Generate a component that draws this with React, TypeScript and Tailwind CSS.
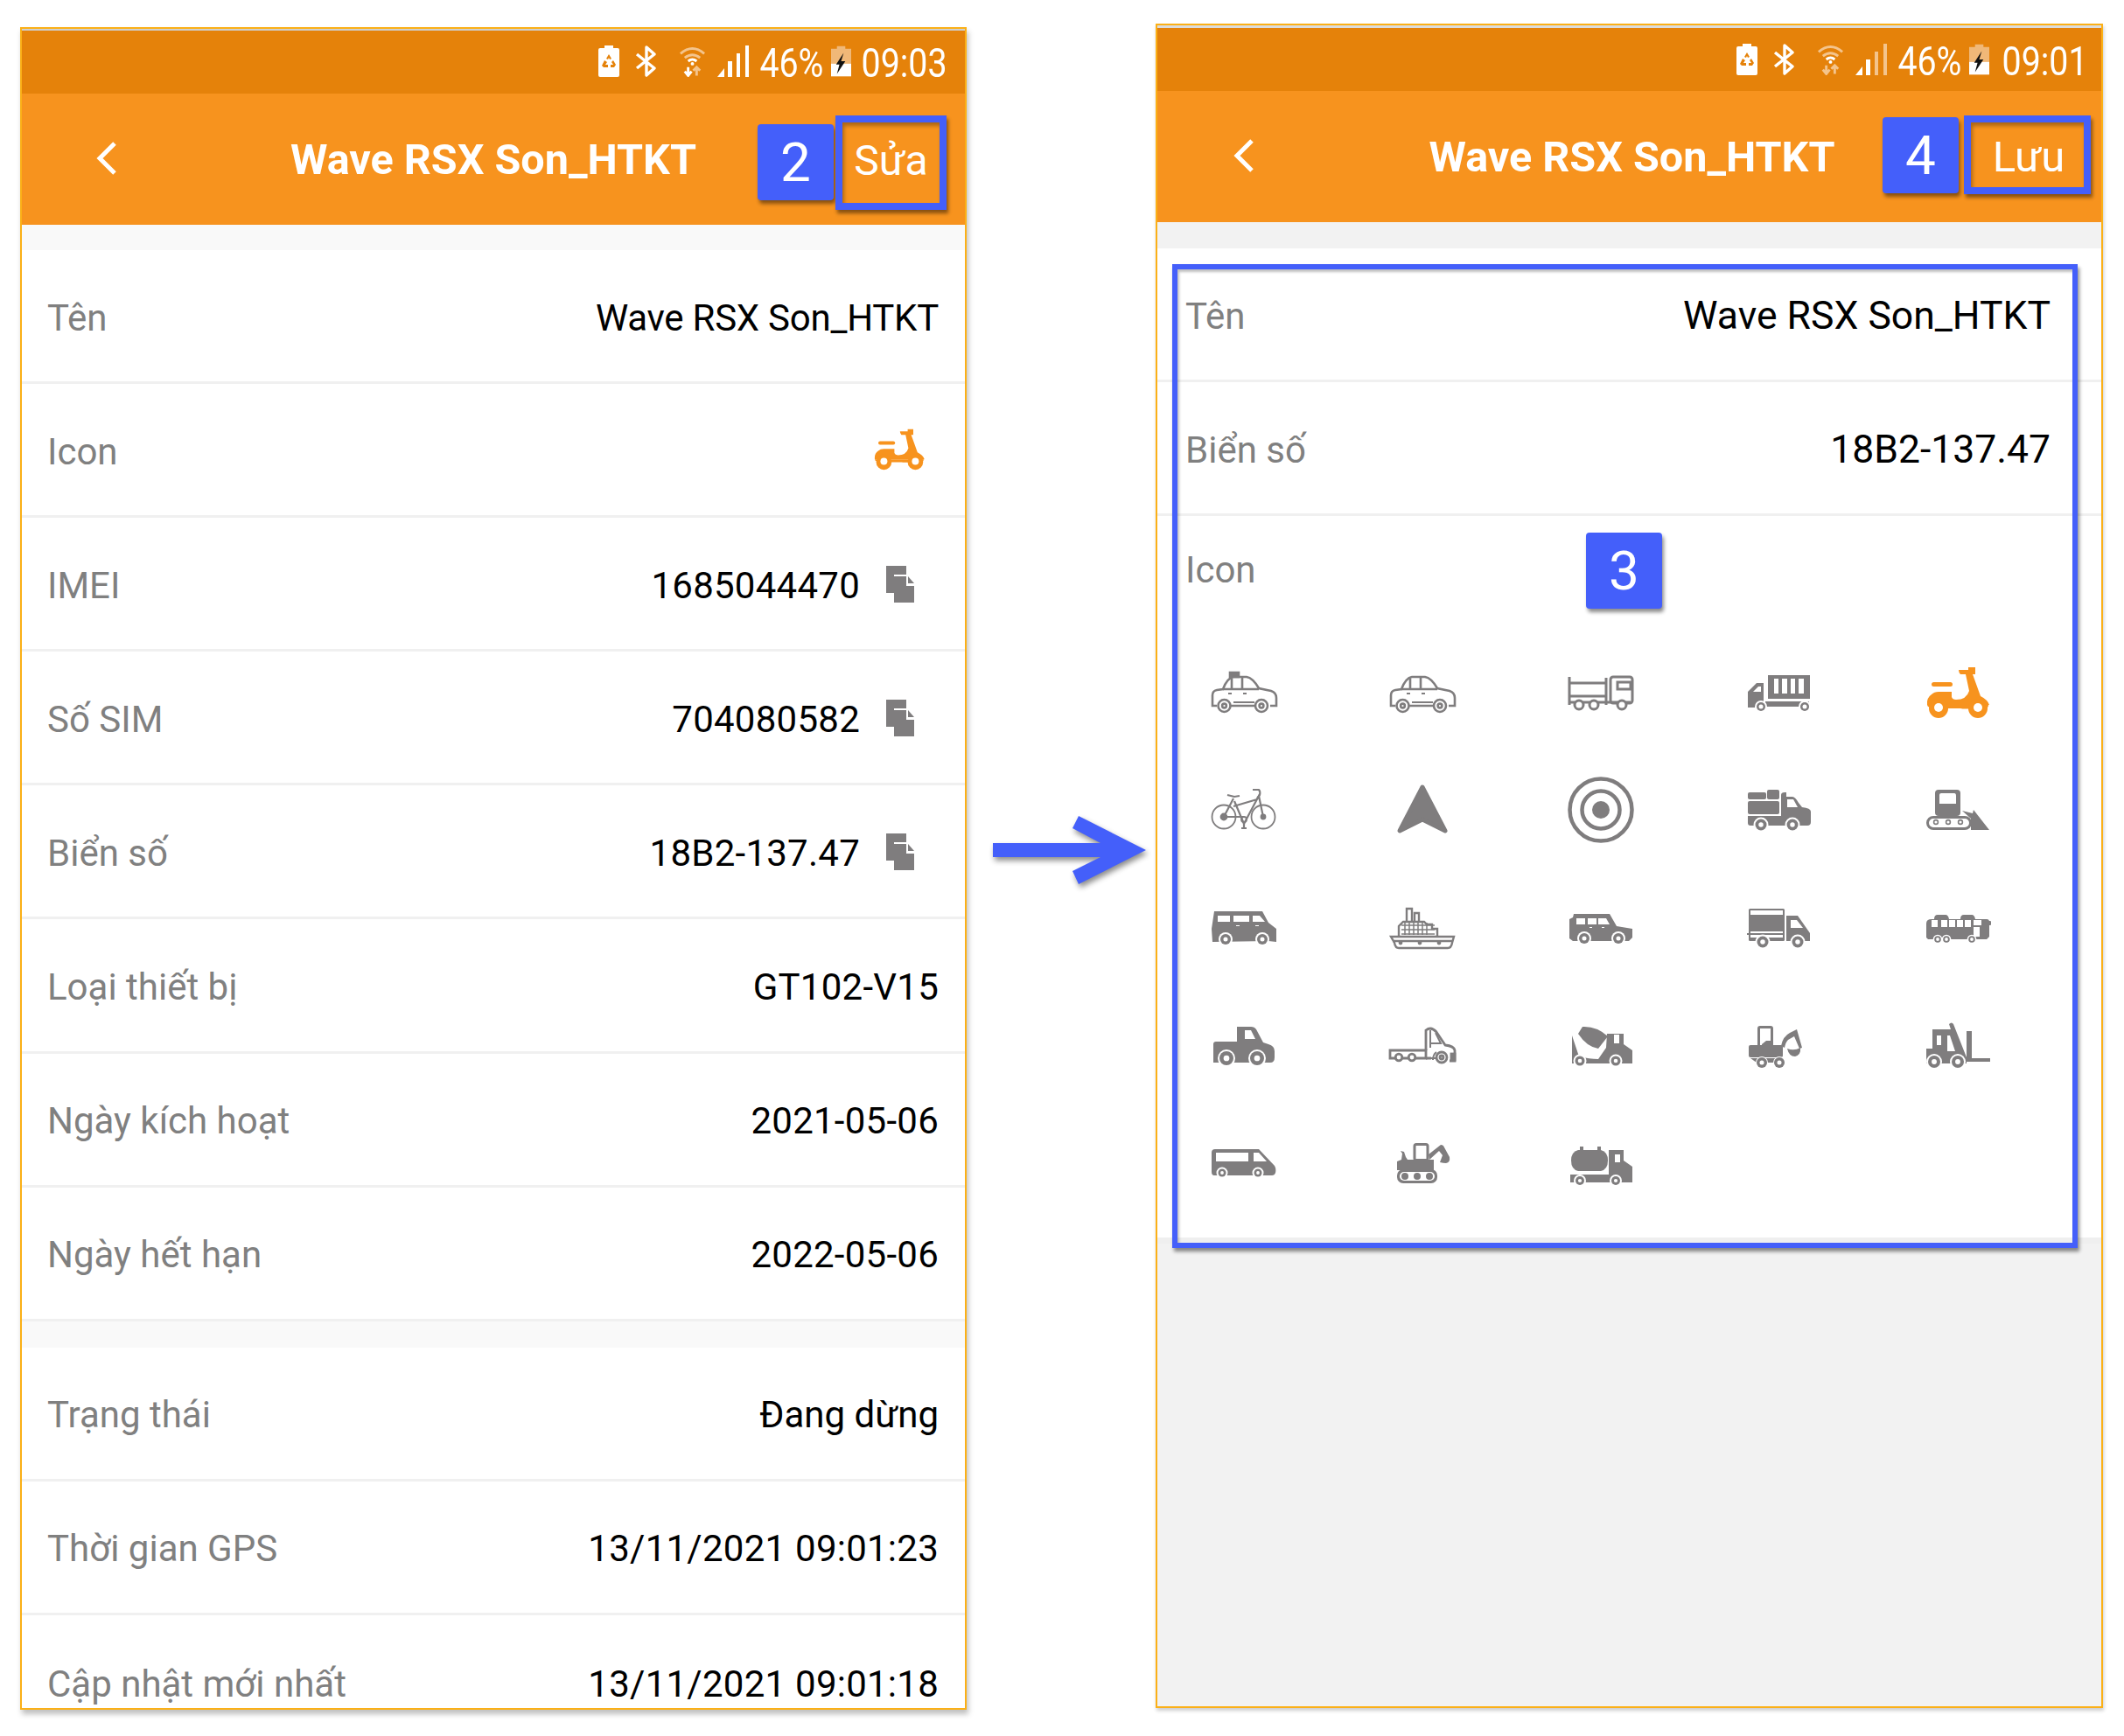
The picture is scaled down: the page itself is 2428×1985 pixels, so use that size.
import * as React from "react";

const GRAY = "#7f7d7e";
const ORANGE = "#f7931e";

type Fg = { c?: string };

// wheel with a white ring around it and a white hub
function W({ x, y, r, c = GRAY, ring = 2, hub = 0.42 }: { x: number; y: number; r: number; c?: string; ring?: number; hub?: number }) {
  return (
    <g>
      <circle cx={x} cy={y} r={r + ring} fill="#fff" />
      <circle cx={x} cy={y} r={r} fill={c} />
      <circle cx={x} cy={y} r={r * hub} fill="#fff" />
    </g>
  );
}

function Scooter({ c = ORANGE }: Fg) {
  return (
    <g fill={c}>
      <rect x="10" y="18" width="24" height="5" rx="2.5" />
      <path d="M41 4h11V1h8v8h-3l9 25q8 4 10 10H5q-1-8 5-12 3-3 8-3h15v6q1 3 5 3 12 0 15-10L49 9h-6q-2-2-2-5z" />
      <path d="M5 44h70q0 3-3 4H55q-7 1-12 0H18Q5 48 5 44z" />
      <circle cx="18" cy="48" r="11" />
      <circle cx="63" cy="48" r="11" />
      <circle cx="18" cy="47" r="5" fill="#fff" />
      <circle cx="63" cy="47" r="5" fill="#fff" />
    </g>
  );
}

function OutlineCar({ taxi }: { taxi?: boolean }) {
  return (
    <g fill="none" stroke={GRAY} strokeWidth="2.6">
      {taxi && <rect x="24" y="7" width="10" height="5" fill={GRAY} />}
      <path d="M9 45H4V33q0-5 5-6l7-1q5-13 12-14h15q7 1 14 13l14 3q6 2 6 8v9h-7M52 45H25" />
      <path d="M16 26h41M26 14v12M38 13v13" />
      <path d="M22 31h4M39 31h4M28 41h24" strokeWidth="2" />
      <circle cx="17.5" cy="45" r="7" fill="#fff" />
      <circle cx="17.5" cy="45" r="2.4" />
      <circle cx="60" cy="45" r="7" fill="#fff" />
      <circle cx="60" cy="45" r="2.4" />
    </g>
  );
}

const vehicles: React.ReactNode[] = [
  <OutlineCar taxi />,
  <OutlineCar />,
  // flatbed truck
  <g>
    <g fill="none" stroke={GRAY} strokeWidth="3">
      <path d="M4 12v32M4 19h42M4 34h42M46 13v31M4 41h70" />
      <rect x="51" y="12" width="25" height="30" rx="3" />
      <rect x="59" y="18" width="15" height="8" />
    </g>
    <g fill="#fff" stroke={GRAY} strokeWidth="3">
      <circle cx="15" cy="44" r="5" />
      <circle cx="32" cy="44" r="5" />
      <circle cx="64" cy="44" r="5" />
    </g>
  </g>,
  // container truck
  <g fill={GRAY}>
    <path d="M27 10h48v27H27z" />
    <path d="M34 14h5v17h-5zM43 14h6v17h-6zM53 14h5v17h-5zM62 14h6v17h-6z" fill="#fff" />
    <path d="M4 47V29l10-10h8v28z" />
    <path d="M10 29l6-6h3v6z" fill="#fff" />
    <rect x="24" y="40" width="50" height="6" />
    <W x={19} y={46} r={5} hub={0.5} />
    <W x={69} y={46} r={5} hub={0.5} />
  </g>,
  <Scooter />,
  // bicycle
  <g fill="none" stroke={GRAY} strokeWidth="1.8">
    <circle cx="17" cy="38" r="13.5" />
    <circle cx="62" cy="38" r="13.5" />
    <circle cx="17" cy="38" r="3.5" fill={GRAY} />
    <circle cx="62" cy="38" r="2.5" fill={GRAY} />
    <path d="M17 38l11-21M29 20l11 26L57 14l5 24M28 26L55 18M18 38h22" strokeWidth="2.2" />
    <path d="M21 13l8 2 6-1M50 7h7q2 2 1 6l-3 4" strokeWidth="2.2" />
    <circle cx="40" cy="41" r="3" />
    <path d="M40 44v6M37 51h6" strokeWidth="2.2" />
  </g>,
  // navigation arrow
  <path d="M40 4L66 54 40 41 14 54z" fill={GRAY} stroke={GRAY} strokeWidth="5" strokeLinejoin="round" />,
  // target
  <g fill="none" stroke={GRAY}>
    <circle cx="40" cy="30" r="35.5" strokeWidth="4.5" />
    <circle cx="40" cy="30" r="21.5" strokeWidth="4.5" />
    <circle cx="40" cy="30" r="10" fill={GRAY} stroke="none" />
  </g>,
  // pickup with cargo
  <g fill={GRAY}>
    <rect x="4" y="10" width="21" height="8" rx="2" />
    <rect x="26" y="7" width="14" height="11" rx="2" />
    <rect x="4" y="20" width="36" height="15" rx="2" />
    <path d="M4 37h38V13q0-3 4-3h2v5h7q3 0 7 7l4 5q10 1 10 5v12q0 4-4 4H7q-3 0-3-3z" />
    <path d="M49 18h7l5 9H49z" fill="#fff" />
    <W x={19} y={47} r={6.5} />
    <W x={55} y={47} r={6.5} />
  </g>,
  // bulldozer
  <g fill={GRAY}>
    <rect x="14" y="7" width="29" height="30" rx="4" />
    <path d="M19 13q0-2 2-2h15q2 0 2 3v9H19z" fill="#fff" />
    <path d="M45 31l12 3 1-4 18 23H55V40z" />
    <rect x="5.5" y="38.5" width="49" height="13" rx="6.5" fill="#fff" stroke={GRAY} strokeWidth="3" />
    <g fill="none" stroke={GRAY} strokeWidth="1.6">
      <circle cx="15" cy="44" r="2.4" />
      <circle cx="29" cy="44" r="2.4" />
      <circle cx="43" cy="44" r="2.4" />
    </g>
  </g>,
  // van
  <g fill={GRAY}>
    <path d="M6 11h55l7 13 9 7v15l-9-1-64 1-1-15z" />
    <path d="M10 16h14v7H10zM28 16h18v7H28zM50 16h8l6 7H50z" fill="#fff" />
    <path d="M31 27h4v1h-4zM53 27h4v1h-4z" fill="#fff" />
    <W x={19} y={43} r={6} />
    <W x={61} y={43} r={6} />
  </g>,
  // ship
  <g fill="none" stroke={GRAY} strokeWidth="2.4">
    <path d="M22 22V8h6v14M31 22V13h5v9" />
    <path d="M13 40V28l5-5h24l3 3h6v5h6v9" />
    <path d="M16 27h38M16 32h38M16 37h38M20 24v14M25 24v14M30 24v14M35 24v14M40 24v14M45 24v14" strokeWidth="1.5" />
    <path d="M4 40h72l-2 7q-1 6-5 6H13q-4 0-5-6z" />
    <path d="M6 45h68" />
    <circle cx="15" cy="47" r="1.2" fill={GRAY} />
    <circle cx="37" cy="47" r="1.2" fill={GRAY} />
    <circle cx="59" cy="47" r="1.2" fill={GRAY} />
  </g>,
  // suv
  <g fill={GRAY}>
    <path d="M9 14h41l8 14 18 3v10l-4 4H8l-4-3V20l4-2z" />
    <path d="M12 19h10v7H12zM25 19h10v7H25zM37 19h9l4 7H37z" fill="#fff" />
    <path d="M27 29h3v1h-3zM41 29h3v1h-3z" fill="#fff" />
    <W x={21} y={42} r={6} />
    <W x={60} y={42} r={6} />
  </g>,
  // box truck
  <g fill={GRAY}>
    <rect x="5" y="8" width="41" height="37" rx="1.5" />
    <path d="M7 10h37v5H7zM7 34h37v2H7zM7 38h37v3H7z" fill="#fff" />
    <path d="M48 16h13l14 20v9H48z" />
    <path d="M53 21h7l7 9H53z" fill="#fff" />
    <rect x="3" y="36" width="2" height="2" />
    <W x={21} y={46} r={6.5} />
    <W x={61} y={46} r={6.5} />
  </g>,
  // bus
  <g fill={GRAY}>
    <path d="M4 25q0-5 6-5h3q0-5 4-5h9q3 0 4 5h13q0-5 4-5h9q3 0 4 5h13q3 0 3 3v17l-3 3H6l-2-2z" />
    <rect x="75" y="22" width="3" height="5" rx="1" />
    <path d="M10 21h7v8h-7zM21 21h7v8h-7zM30 21h7v8h-7zM39 21h7v8h-7zM48 21h7v8h-7z" fill="#fff" />
    <path d="M58 21h9v6h-9zM58 29h7v11h-7z" fill="#fff" />
    <W x={17} y={43} r={3.8} ring={1.5} hub={0.5} />
    <W x={27} y={43} r={3.8} ring={1.5} hub={0.5} />
    <W x={56} y={43} r={3.8} ring={1.5} hub={0.5} />
  </g>,
  // pickup
  <g fill={GRAY}>
    <path d="M5 28v21h65q5 0 5-6v-7q0-6-7-8l-6-2-8-15q-2-3-6-3H32v17H8q-3 0-3 3z" />
    <path d="M41 12h7l5 10H41z" fill="#fff" />
    <W x={20} y={44} r={8} />
    <W x={55} y={44} r={8} />
  </g>,
  // flatbed semi
  <g fill="none" stroke={GRAY} strokeWidth="2.8">
    <path d="M3 35h41v9H3z" />
    <path d="M44 44h6M44 35V12q6-5 12 2l10 15q10 1 11 6v12h-6" />
    <path d="M49 12v20M55 15l6 12H50M56 37q-4 3-4 9M50 44h7" strokeWidth="2" />
    <rect x="73" y="39" width="4" height="7" fill={GRAY} />
    <circle cx="13" cy="43" r="3.8" fill="#fff" />
    <circle cx="28" cy="43" r="3.8" fill="#fff" />
    <circle cx="62" cy="43" r="6" fill="#fff" />
    <circle cx="62" cy="43" r="2" />
  </g>,
  // mixer
  <g fill={GRAY}>
    <path d="M19 8q16-1 29 11l-11 14Q24 31 14 16z" />
    <path d="M7 50V18l8 24q12 3 22 3l9-13 1-16h19v12l10 7v15z" />
    <rect x="55" y="17" width="6" height="10" fill="#fff" />
    <W x={16} y={47} r={5.5} />
    <W x={57} y={47} r={5.5} />
  </g>,
  // wheeled excavator
  <g fill={GRAY}>
    <rect x="16.5" y="8.5" width="15" height="22" rx="1.5" fill="#fff" stroke={GRAY} strokeWidth="3" />
    <path d="M20 28l5-4h5v6H20z" />
    <rect x="5" y="29" width="39" height="14" rx="2" />
    <path d="M42 30q2-11 10-15l8-4 6 21-3 1-6-14-7 4q-3 3-4 9z" />
    <path d="M49 33q8 3 15-1 1 8-6 10-7 0-9-9z" />
    <path d="M7 44h37l-4 5H14z" />
    <W x={20} y={49} r={6} ring={1} />
    <W x={40} y={49} r={6} ring={1} />
  </g>,
  // forklift
  <g fill={GRAY}>
    <path d="M4 33h7V11h21l-2-6q3-3 5 0l15 38v7H4z" />
    <path d="M16 18h5v11h-5zM28 18h3l6 18h-9z" fill="#fff" />
    <rect x="50" y="13" width="6" height="35" />
    <rect x="50" y="44" width="27" height="4" />
    <W x={13} y={48} r={7} />
    <W x={40} y={48} r={7} />
  </g>,
  // minivan
  <g fill={GRAY}>
    <path d="M7 14h50l18 19q2 3 1 8-1 3-4 3H6q-3 0-3-4V18q0-4 4-4z" />
    <path d="M8 18h37v10H8zM51 18h6l9 10H51z" fill="#fff" />
    <W x={15} y={41} r={4.5} />
    <W x={56} y={41} r={4.5} />
  </g>,
  // tracked excavator
  <g fill={GRAY}>
    <rect x="31" y="8.5" width="15" height="18" rx="2" fill="#fff" stroke={GRAY} strokeWidth="3" />
    <path d="M16 26l1-7-2-3 4 1 2 6 2 3h30v12H11V28z" />
    <path d="M47 20l14-11q3 0 4 3l6 11q1 6-4 7-3 0-7-1l3-8-4-5-11 10z" />
    <rect x="11" y="37" width="46" height="16" rx="7" />
    <rect x="14" y="40" width="40" height="10" rx="5" fill="#fff" />
    <circle cx="20" cy="45" r="4" />
    <circle cx="34" cy="45" r="4" />
    <circle cx="48" cy="45" r="4" />
  </g>,
  // tanker
  <g fill={GRAY}>
    <rect x="16" y="11" width="4" height="6" />
    <rect x="36" y="11" width="4" height="6" />
    <path d="M14 15h26q8 2 8 12t-8 12H14q-8-2-8-12t8-12z" />
    <path d="M49 15h17v12l10 7v18H5v-9h44z" />
    <rect x="56" y="20" width="6" height="9" fill="#fff" />
    <W x={16} y={50} r={5} />
    <W x={57} y={50} r={5} />
  </g>,
];

function Vehicle({ children, w = 80 }: { children: React.ReactNode; w?: number }) {
  return (
    <svg viewBox="0 -10 80 80" width={w} height={w} className="overflow-visible">
      {children}
    </svg>
  );
}

function CopyIcon() {
  return (
    <svg viewBox="0 0 32 42" className="h-[42px] w-[32px]">
      <path d="M0 0h23v10H9v21H0z" fill={GRAY} />
      <path d="M9 12h14v11h9v19H9z" fill={GRAY} />
      <path d="M25 12l7 8h-7z" fill={GRAY} />
    </svg>
  );
}

function StatusBar({ time, left }: { time: string; left?: boolean }) {
  return (
    <div className={`flex h-[72px] items-start justify-end bg-[#e5820a] text-white ${left ? "pr-[20px] pt-[17px]" : "pr-[15px] pt-[18px]"}`}>
      <svg viewBox="0 0 24 36" className="h-[36px] w-[24px]">
        <path d="M7 0h10v3h5q2 0 2 2v29q0 2-2 2H2q-2 0-2-2V5q0-2 2-2h5z" fill="#fff" />
        <path d="M12 10l3 5-2 1-1-2-1 2-2-1zM7 17l3 2-2 3h3v3H6l-2-2zM17 17l3 5-2 3h-4v-3h3l-2-3z" fill="#e5820a" />
      </svg>
      <svg viewBox="0 0 24 36" className="ml-[18px] h-[36px] w-[24px]" fill="none" stroke="#fff" strokeWidth="3.4" strokeLinejoin="round">
        <path d="M2 10l20 16-9 8V2l9 8L2 26" />
      </svg>
      <svg viewBox="0 0 32 36" className="ml-[26px] h-[36px] w-[31px]" fill="none" strokeWidth="3">
        <path d="M2 9q14-12 28 0" stroke="#f4c48c" />
        <path d="M7 14q9-7 18 0" stroke="#f4c48c" />
        <path d="M11 18q5-4 10 0" stroke="#fff" />
        <circle cx="16" cy="21" r="2" fill="#fff" stroke="none" />
        <path d="M11 25v8M7 30l4 5 4-5" stroke={left ? "#fff" : "#f4c48c"} />
        <path d="M21 35v-9M17 29l4-4 4 4" stroke="#f4c48c" />
      </svg>
      <svg viewBox="0 0 36 36" className="ml-[13px] h-[36px] w-[36px]">
        <path d="M0 36l8-10v10z" fill="#fff" />
        <rect x="12" y="18" width="5" height="18" fill="#fff" />
        <rect x="22" y="9" width="4" height="27" fill={left ? "#fff" : "#f4c48c"} />
        <rect x="32" y="0" width="4" height="36" fill={left ? "#fff" : "#f4c48c"} />
      </svg>
      <div className="ml-[14px] flex h-[36px] w-[71px] translate-y-[2px] items-center justify-end">
        <span className="origin-right scale-x-[.855] whitespace-nowrap text-[46px] leading-none">46%</span>
      </div>
      <svg viewBox="0 0 24 36" className="ml-[9px] h-[36px] w-[23px]">
        <path d="M7 0h10v3h7v33H0V3h7z" fill="#f0b878" />
        <rect x="0" y="21" width="24" height="15" fill="#fff" />
        <path d="M15 8L6 22h4l-3 11 10-15h-5z" fill="#111" />
      </svg>
      <div className={`ml-[14px] flex h-[36px] translate-y-[2px] items-center justify-end ${left ? "w-[96px]" : "w-[99px]"}`}>
        <span className="origin-right scale-x-[.855] whitespace-nowrap text-[46px] leading-none">{time}</span>
      </div>
    </div>
  );
}

function Header({ tail, right }: { tail: React.ReactNode; right?: boolean }) {
  return (
    <div className={`relative flex h-[150px] items-center justify-center bg-[#f7931e] text-white ${right ? "pl-[6px]" : ""}`}>
      <svg
        viewBox="0 0 24 38"
        className={`absolute top-[55px] h-[38px] w-[24px] ${right ? "left-[87px]" : "left-[85px]"}`}
        fill="none"
        stroke="#fff"
        strokeWidth="5"
      >
        <path d="M21 2L4 19l17 17" />
      </svg>
      <span className="pt-[3px] text-[48.5px] font-bold leading-none">Wave RSX Son_HTKT</span>
      {tail}
    </div>
  );
}

function Badge({ n, className }: { n: string; className: string }) {
  return (
    <div className={`absolute flex h-[87px] w-[87px] items-center justify-center rounded-[4px] bg-[#445ffa] text-[62px] leading-none text-white shadow-[2px_4px_4px_rgba(0,0,0,.45)] ${className}`}>
      {n}
    </div>
  );
}

function Row({ label, children, last, wide }: { label: string; children?: React.ReactNode; last?: boolean; wide?: boolean }) {
  return (
    <div
      className={`flex h-[153.1px] items-center justify-between bg-white pt-[4px] text-[42px] ${wide ? "pl-[32px] pr-[58px]" : "pl-[29px] pr-[30px]"} ${
        last ? "" : "border-b-[3px] border-[#f0f0f0]"
      }`}
    >
      <span className="text-[#808080]">{label}</span>
      <span className={`flex items-center text-black ${wide ? "text-[44.5px]" : ""}`}>{children}</span>
    </div>
  );
}

function Num({ children }: { children: React.ReactNode }) {
  return <span className="tracking-[.25px]">{children}</span>;
}

function Copyable({ value }: { value: string }) {
  return (
    <>
      <Num>{value}</Num>
      <span className="mb-[3px] ml-[30px] mr-[28px]">
        <CopyIcon />
      </span>
    </>
  );
}

export default function App() {
  return (
    <div className="flex h-[1985px] w-[2428px] items-start overflow-hidden bg-white font-['Roboto',sans-serif]">
      {/* Before editing */}
      <div className="ml-[23px] mt-[31px] h-[1924px] w-[1082px] shrink-0 overflow-hidden border-2 border-[#fbb017] bg-white shadow-[2px_5px_6px_rgba(0,0,0,.25)]">
        <div className="h-[2px] bg-[#cfcfcf]" />
        <StatusBar time="09:03" left />
        <Header
          tail={
            <>
              <Badge n="2" className="left-[841px] top-[35px]" />
              <div className="absolute left-[930px] top-[25px] flex h-[108px] w-[127px] items-center justify-center border-[8px] border-[#445ffa] pb-[4px] text-[48px] shadow-[2px_4px_4px_rgba(0,0,0,.45),inset_2px_4px_4px_rgba(0,0,0,.3)]">
                Sửa
              </div>
            </>
          }
        />
        <div className="h-[29px] bg-[#f9f9f9]" />
        <Row label="Tên">
          <span className="tracking-[-.25px]">Wave RSX Son_HTKT</span>
        </Row>
        <Row label="Icon">
          <span className="mb-[4px] mr-[13px]">
            <Vehicle w={64}>
              <Scooter />
            </Vehicle>
          </span>
        </Row>
        <Row label="IMEI">
          <Copyable value="1685044470" />
        </Row>
        <Row label="Số SIM">
          <Copyable value="704080582" />
        </Row>
        <Row label="Biển số">
          <Copyable value="18B2-137.47" />
        </Row>
        <Row label="Loại thiết bị">
          <Num>GT102-V15</Num>
        </Row>
        <Row label="Ngày kích hoạt">
          <Num>2021-05-06</Num>
        </Row>
        <Row label="Ngày hết hạn">
          <Num>2022-05-06</Num>
        </Row>
        <div className="h-[30px] bg-[#f9f9f9]" />
        <Row label="Trạng thái">Đang dừng</Row>
        <Row label="Thời gian GPS">
          <Num>13/11/2021 09:01:23</Num>
        </Row>
        <Row label="Cập nhật mới nhất" last>
          <Num>13/11/2021 09:01:18</Num>
        </Row>
      </div>

      {/* Arrow between the two screens */}
      <div className="w-[216px] shrink-0 pl-[30px] pt-[933px]">
        <svg viewBox="0 0 175 78" className="h-[78px] w-[175px] drop-shadow-[2px_4px_3px_rgba(0,0,0,.45)]">
          <path d="M0 31h123L91 14 98 0l77 39-77 39-7-15 32-16H0z" fill="#445ffa" />
        </svg>
      </div>

      {/* While editing */}
      <div className="mt-[27px] h-[1926px] w-[1083px] shrink-0 overflow-hidden border-2 border-[#fbb017] bg-[#f2f2f2] shadow-[1px_3px_4px_rgba(0,0,0,.2)]">
        <div className="h-[3px] bg-[#dcdcdc]" />
        <StatusBar time="09:01" />
        <Header
          right
          tail={
            <>
              <Badge n="4" className="left-[829px] top-[30px]" />
              <div className="absolute left-[922px] top-[28px] flex h-[90px] w-[145px] items-center justify-center border-[8px] border-[#445ffa] pl-[3px] pt-[6px] text-[49px] shadow-[2px_4px_4px_rgba(0,0,0,.45),inset_2px_4px_4px_rgba(0,0,0,.3)]">
                Lưu
              </div>
            </>
          }
        />
        <div className="h-[30px]" />
        <div className="relative">
          <Row label="Tên" wide>
            Wave RSX Son_HTKT
          </Row>
          <Row label="Biển số" wide>
            18B2-137.47
          </Row>
          <div className="h-[832px] border-b-[7px] border-[#efefef] bg-white">
            <div className="pl-[32px] pt-[37px] text-[42px] leading-[50px] text-[#808080]">Icon</div>
            <div className="ml-[-3px] mt-[47px] grid grid-cols-[repeat(5,204px)] auto-rows-[134.7px]">
              {vehicles.map((v, i) => (
                <div key={i} className="flex items-center justify-center">
                  <Vehicle>{v}</Vehicle>
                </div>
              ))}
            </div>
          </div>
          <Badge n="3" className="left-[490px] top-[325px]" />
          <div className="absolute left-[17px] top-[18px] h-[1125px] w-[1035px] border-[6px] border-[#445ffa] shadow-[2px_4px_4px_rgba(0,0,0,.45),inset_2px_3px_3px_rgba(0,0,0,.25)]" />
        </div>
      </div>
    </div>
  );
}
